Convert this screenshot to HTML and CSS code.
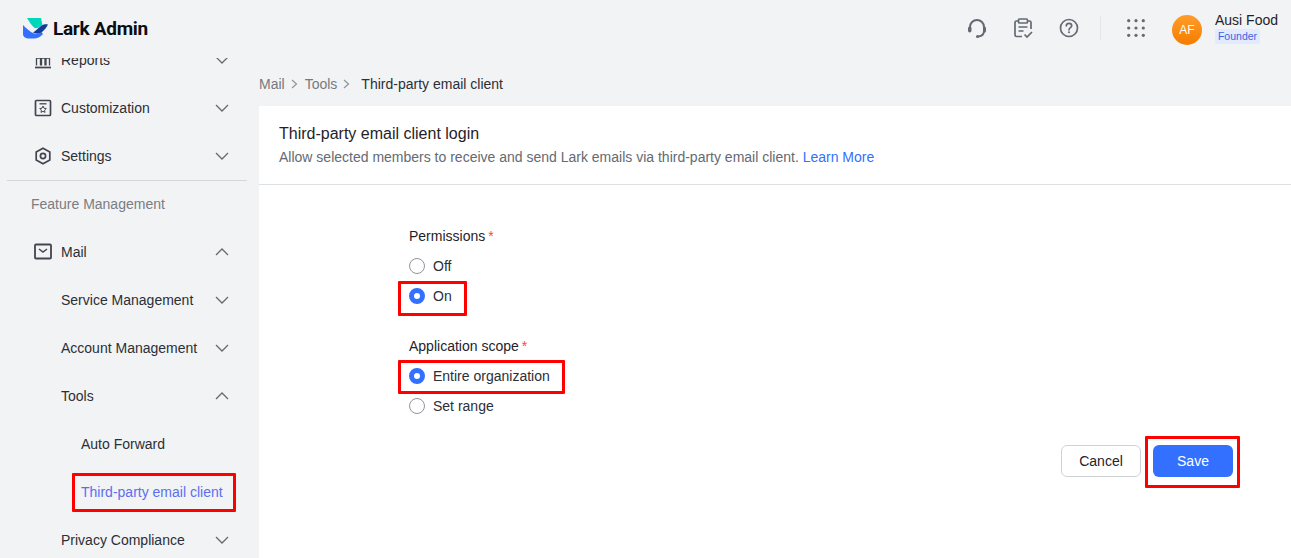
FILE: index.html
```html
<!DOCTYPE html>
<html>
<head>
  <meta charset="UTF-8">
  <meta name="viewport" content="width=device-width, initial-scale=1.0">
  <title>Third-party email client - Lark Admin</title>
  <link rel="stylesheet" href="styles.css">
</head>
<body>
  <header class="topbar">
    <div class="brand">
      <svg class="brand-logo" width="26" height="21" viewBox="0 0 26 21">
        <path d="M4 0H18C18.500 2.500 19 4.500 19.500 7L15.500 9.500C14 10.500 12.500 10.500 11 9.500C8.500 7 6 3.500 4 0Z" fill="#00d6b9"/>
        <path d="M0 7C3 10 7 14 11 15.500C14 16.500 16.500 15.500 18.500 14L20 16C17.500 19 14 20.500 11 20.500H6C3 20.500 0 19 0 16Z" fill="#3370ff"/>
        <path d="M10 14.500C13 12.500 15.500 10 18 8C20 6.500 22 6 25 6.500C23.500 9.500 21 12.500 18.500 14.500C15.500 16 12.500 16 10 14.500Z" fill="#133c9a"/>
      </svg>
      <span class="brand-name">Lark Admin</span>
    </div>
    <div class="topbar-right">
      <svg class="top-icon" width="22" height="22" viewBox="0 0 22 22" fill="none" stroke="#646a73" stroke-width="2">
        <path d="M4 12V10A7 7 0 0 1 18 10V14C18 17 16 19 12.500 19.500" stroke-linecap="round"/>
        <rect x="2" y="9.500" width="3.500" height="6" rx="1.700" fill="#646a73" stroke="none"/>
        <rect x="17" y="9.500" width="3" height="6" rx="1.500" fill="#646a73" stroke="none"/>
        <circle cx="11.500" cy="19.500" r="1.500" fill="#646a73" stroke="none"/>
      </svg>
      <svg class="top-icon" width="22" height="22" viewBox="0 0 22 22" fill="none" stroke="#646a73" stroke-width="1.700">
        <path d="M6.500 4H4.500C3.500 4 3 4.500 3 5.500V18C3 19 3.500 19.500 4.500 19.500H10M15.500 4H17.500C18.500 4 19 4.500 19 5.500V12"/>
        <rect x="6.500" y="2" width="9" height="4" rx="1"/>
        <path d="M6.500 10H15.500M6.500 14H11.500"/>
        <path d="M12.500 17.500L15 20L20 15"/>
      </svg>
      <svg class="top-icon" width="22" height="22" viewBox="0 0 22 22" fill="none" stroke="#646a73" stroke-width="1.700">
        <circle cx="11" cy="11" r="8.500"/>
        <path d="M8.300 8.800C8.300 7.300 9.500 6.300 11 6.300C12.500 6.300 13.700 7.300 13.700 8.700C13.700 10.500 11 10.700 11 12.800" stroke-linecap="round"/>
        <circle cx="11" cy="15.300" r="1" fill="#646a73" stroke="none"/>
      </svg>
      <span class="top-divider"></span>
      <svg class="apps-icon" width="18" height="18" viewBox="0 0 18 18" fill="#646a73">
        <circle cx="1.700" cy="1.700" r="1.600"/><circle cx="9" cy="1.700" r="1.600"/><circle cx="16.300" cy="1.700" r="1.600"/>
        <circle cx="1.700" cy="9" r="1.600"/><circle cx="9" cy="9" r="1.600"/><circle cx="16.300" cy="9" r="1.600"/>
        <circle cx="1.700" cy="16.300" r="1.600"/><circle cx="9" cy="16.300" r="1.600"/><circle cx="16.300" cy="16.300" r="1.600"/>
      </svg>
      <div class="avatar">AF</div>
      <div class="user-info">
        <div class="user-name">Ausi Food</div>
        <div class="user-role">Founder</div>
      </div>
    </div>
  </header>

  <div class="layout">
    <nav class="sidebar">
      <div class="sidebar-list">
        <div class="nav-item">
          <svg class="nav-icon" width="18" height="18" viewBox="0 0 18 18" fill="none" stroke="#41464f" stroke-width="1.300">
            <path d="M1 16.500H17" stroke-width="1.700"/>
            <path d="M2.500 14.500V7H6.500V14.500M7.500 14.500V7H11V14.500M12 14.500V7H15.500V14.500"/>
          </svg>
          <span class="nav-label">Reports</span>
          <svg class="chevron" width="14" height="8" viewBox="0 0 14 8"><path d="M1 1L7 7L13 1"/></svg>
        </div>
        <div class="nav-item">
          <svg class="nav-icon" width="18" height="18" viewBox="0 0 18 18" fill="none" stroke="#41464f" stroke-width="1.700">
            <rect x="1.500" y="1.500" width="15" height="15" rx="1"/>
            <path d="M5.500 4.800H12.500" stroke-width="1.300"/>
            <path d="M9 7L10 9.200L12.300 9.500L10.600 11.100L11 13.400L9 12.300L7 13.400L7.400 11.100L5.700 9.500L8 9.200Z" stroke-width="1"/>
          </svg>
          <span class="nav-label">Customization</span>
          <svg class="chevron" width="14" height="8" viewBox="0 0 14 8"><path d="M1 1L7 7L13 1"/></svg>
        </div>
        <div class="nav-item">
          <svg class="nav-icon" width="18" height="18" viewBox="0 0 18 18" fill="none" stroke="#41464f" stroke-width="1.700">
            <path d="M9 1.200L15.800 5V13L9 16.800L2.200 13V5Z"/>
            <circle cx="9" cy="9" r="2.600"/>
          </svg>
          <span class="nav-label">Settings</span>
          <svg class="chevron" width="14" height="8" viewBox="0 0 14 8"><path d="M1 1L7 7L13 1"/></svg>
        </div>
        <div class="nav-divider"></div>
        <div class="nav-group">Feature Management</div>
        <div class="nav-item">
          <svg class="nav-icon" width="18" height="18" viewBox="0 0 18 18" fill="none" stroke="#41464f" stroke-width="1.800">
            <rect x="1" y="1.500" width="16" height="14" rx="1"/>
            <path d="M5 6L9 9L13 6" stroke-width="1.500"/>
          </svg>
          <span class="nav-label">Mail</span>
          <svg class="chevron" width="14" height="8" viewBox="0 0 14 8"><path d="M1 7L7 1L13 7"/></svg>
        </div>
        <div class="nav-item nav-sub">
          <span class="nav-label">Service Management</span>
          <svg class="chevron" width="14" height="8" viewBox="0 0 14 8"><path d="M1 1L7 7L13 1"/></svg>
        </div>
        <div class="nav-item nav-sub">
          <span class="nav-label">Account Management</span>
          <svg class="chevron" width="14" height="8" viewBox="0 0 14 8"><path d="M1 1L7 7L13 1"/></svg>
        </div>
        <div class="nav-item nav-sub">
          <span class="nav-label">Tools</span>
          <svg class="chevron" width="14" height="8" viewBox="0 0 14 8"><path d="M1 7L7 1L13 7"/></svg>
        </div>
        <div class="nav-item nav-leaf">
          <span class="nav-label">Auto Forward</span>
        </div>
        <div class="nav-item nav-leaf nav-active">
          <span class="nav-label">Third-party email client</span>
        </div>
        <div class="nav-item nav-sub">
          <span class="nav-label">Privacy Compliance</span>
          <svg class="chevron" width="14" height="8" viewBox="0 0 14 8"><path d="M1 1L7 7L13 1"/></svg>
        </div>
      </div>
    </nav>

    <main class="main">
      <div class="breadcrumb">
        <span>Mail</span>
        <svg class="crumb-sep" width="7" height="10" viewBox="0 0 7 10"><path d="M1 1L5.500 5L1 9"/></svg>
        <span>Tools</span>
        <svg class="crumb-sep" width="7" height="10" viewBox="0 0 7 10"><path d="M1 1L5.500 5L1 9"/></svg>
        <span class="crumb-current">Third-party email client</span>
      </div>
      <section class="card">
        <div class="card-head">
          <h1>Third-party email client login</h1>
          <p>Allow selected members to receive and send Lark emails via third-party email client. <a href="#">Learn More</a></p>
        </div>
        <form class="card-body">
          <div class="field">
            <div class="field-label">Permissions<span class="required">*</span></div>
            <label class="radio"><span class="radio-dot"></span>Off</label>
            <label class="radio"><span class="radio-dot checked"></span>On</label>
          </div>
          <div class="field">
            <div class="field-label">Application scope<span class="required">*</span></div>
            <label class="radio"><span class="radio-dot checked"></span>Entire organization</label>
            <label class="radio"><span class="radio-dot"></span>Set range</label>
          </div>
          <div class="actions">
            <button type="button" class="btn btn-cancel">Cancel</button>
            <button type="button" class="btn btn-save">Save</button>
          </div>
        </form>
      </section>
    </main>
  </div>

  <!-- red callouts drawn over the screenshot -->
  <div class="callout callout-nav"></div>
  <div class="callout callout-on"></div>
  <div class="callout callout-scope"></div>
  <div class="callout callout-save"></div>
</body>
</html>
```

FILE: styles.css
```css
* {
    box-sizing: border-box;
}

html, body {
    height: 100%;
}

body {
    margin: 0;
    font-family: 'Liberation Sans', Arial, sans-serif;
    font-size: 14px;
    color: #1f2329;
    background-color: #f2f3f5;
    overflow: hidden;
    display: flex;
    flex-direction: column;
    position: relative;
}

/* Top bar */
.topbar {
    height: 58px;
    flex-shrink: 0;
    display: flex;
    align-items: center;
    justify-content: space-between;
    padding: 0 13px 2px 23px;
}

.brand {
    display: flex;
    align-items: center;
    gap: 4px;
}

.brand-name {
    font-family: Roboto, sans-serif;
    font-size: 19px;
    font-weight: 700;
    color: #0c0e11;
    letter-spacing: -0.3px;
}

.topbar-right {
    display: flex;
    align-items: center;
}

.top-icon {
    margin-left: 24px;
}

.top-divider {
    width: 1px;
    height: 24px;
    background-color: #e4e6e9;
    margin: 0 26px 0 20px;
}

.apps-icon {
    margin-right: 27px;
}

.avatar {
    width: 30px;
    height: 30px;
    border-radius: 50%;
    background: linear-gradient(#ff9d2a, #f57c00);
    color: #ffffff;
    font-size: 12px;
    font-weight: 500;
    line-height: 30px;
    text-align: center;
    margin: 4px 13px 0 0;
}

.user-info {
    margin-bottom: 1px;
}

.user-name {
    font-size: 14px;
    line-height: 18px;
}

.user-role {
    width: fit-content;
    padding: 0 3px;
    font-size: 10.5px;
    line-height: 15px;
    color: #3d64e0;
    background-color: #e1eaff;
    border-radius: 2px;
}

.layout {
    flex: 1;
    display: flex;
    min-height: 0;
}

/* Sidebar */
.sidebar {
    width: 259px;
    flex-shrink: 0;
    overflow: hidden;
}

.sidebar-list {
    margin-top: -22px;
}

.nav-item {
    height: 48px;
    display: flex;
    align-items: center;
    padding: 0 30px 0 34px;
    color: #2b2f36;
}

.nav-icon {
    margin-right: 9px;
    flex-shrink: 0;
}

.nav-label {
    flex: 1;
    white-space: nowrap;
}

.chevron {
    fill: none;
    stroke: #646a73;
    stroke-width: 1.300;
    flex-shrink: 0;
}

.nav-sub {
    padding-left: 61px;
}

.nav-leaf {
    padding-left: 81px;
}

.nav-active {
    color: #5a6ff0;
}

.nav-divider {
    height: 1px;
    width: 240px;
    margin-left: 7px;
    background-color: #d5d7da;
}

.nav-group {
    height: 47px;
    display: flex;
    align-items: center;
    padding: 0 0 2px 31px;
    color: #7a7d82;
}

/* Main area */
.main {
    flex: 1;
    min-width: 0;
    display: flex;
    flex-direction: column;
}

.breadcrumb {
    height: 48px;
    flex-shrink: 0;
    display: flex;
    align-items: center;
    padding-top: 4px;
    color: #76797e;
}

.crumb-sep {
    fill: none;
    stroke: #8f959e;
    stroke-width: 1.200;
    margin: 0 7px 0 6px;
}

.crumb-current {
    color: #2b2f36;
    margin-left: 4px;
}

.card {
    flex: 1;
    background-color: #ffffff;
}

.card-head {
    height: 79px;
    padding: 18px 20px 0;
    border-bottom: 1px solid #dee0e3;
}

.card-head h1 {
    margin: 0;
    font-size: 16px;
    font-weight: 400;
    line-height: 19px;
    color: #1f2329;
}

.card-head p {
    margin: 5px 0 0;
    line-height: 18px;
    color: #646a73;
}

.card-head a {
    color: #3370ff;
    text-decoration: none;
}

.card-body {
    padding: 41px 58px 0 150px;
}

.field {
    margin-bottom: 25px;
}

.field-label {
    height: 20px;
    line-height: 20px;
    margin-bottom: 5px;
}

.required {
    color: #f54a45;
    margin-left: 3px;
}

.radio {
    height: 30px;
    display: flex;
    align-items: center;
    color: #2b2f36;
}

.radio-dot {
    width: 16px;
    height: 16px;
    border-radius: 50%;
    border: 1px solid #8f959e;
    margin-right: 8px;
    background-color: #ffffff;
}

.radio-dot.checked {
    border: 5px solid #3370ff;
}

.actions {
    display: flex;
    justify-content: flex-end;
    gap: 12px;
    margin-top: -1px;
}

.btn {
    width: 80px;
    height: 32px;
    border-radius: 6px;
    font-family: inherit;
    font-size: 14px;
    cursor: pointer;
}

.btn-cancel {
    background-color: #ffffff;
    border: 1px solid #d0d3d6;
    color: #1f2329;
}

.btn-save {
    background-color: #3370ff;
    border: none;
    color: #ffffff;
}

/* Red annotations over the page */
.callout {
    position: absolute;
    border: 3px solid #fe0000;
    border-radius: 1px;
    pointer-events: none;
}

.callout-nav {
    left: 72px;
    top: 473px;
    width: 164px;
    height: 39px;
}

.callout-on {
    left: 398px;
    top: 281px;
    width: 69px;
    height: 35px;
}

.callout-scope {
    left: 398px;
    top: 360px;
    width: 167px;
    height: 34px;
}

.callout-save {
    left: 1145px;
    top: 436px;
    width: 95px;
    height: 52px;
}
```
